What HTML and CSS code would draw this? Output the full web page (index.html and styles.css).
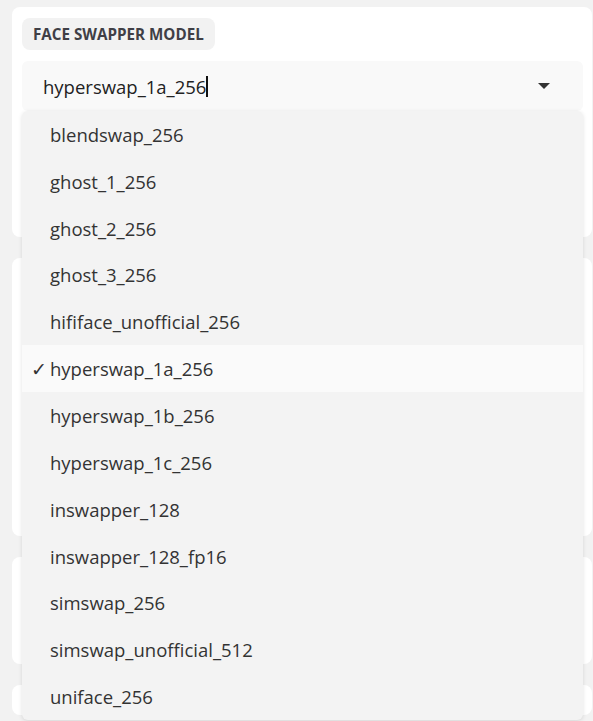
FILE: index.html
```html
<!DOCTYPE html>
<html>
<head>
  <title>Face Swapper</title>
  <link rel="stylesheet" href="styles.css">
</head>
<body>
  <div class="page">

    <div class="block block-model">
      <span class="block-label">Face Swapper Model</span>

      <div class="dropdown">
        <div class="dropdown-input">
          <span class="dropdown-value">hyperswap_1a_256</span><span class="caret"></span>
          <span class="arrow"></span>
        </div>

        <ul class="options">
          <li class="option">blendswap_256</li>
          <li class="option">ghost_1_256</li>
          <li class="option">ghost_2_256</li>
          <li class="option">ghost_3_256</li>
          <li class="option">hififace_unofficial_256</li>
          <li class="option selected"><span class="check">✓</span>hyperswap_1a_256</li>
          <li class="option">hyperswap_1b_256</li>
          <li class="option">hyperswap_1c_256</li>
          <li class="option">inswapper_128</li>
          <li class="option">inswapper_128_fp16</li>
          <li class="option">simswap_256</li>
          <li class="option">simswap_unofficial_512</li>
          <li class="option">uniface_256</li>
        </ul>
      </div>
    </div>

    <div class="block block-two"></div>
    <div class="block block-three"></div>
    <div class="block block-four"></div>

  </div>
</body>
</html>
```

FILE: styles.css
```css
body {
  background-color: #f2f2f2;
  margin: 0;
  padding: 0;
  font-family: "Open Sans", "Noto Sans", sans-serif;
  color: #333333;
  overflow: hidden;
  height: 721px;
}
.page {
  padding: 7px 1px 0 12px;
  display: flex;
  flex-direction: column;
  gap: 21px;
}
.block {
  background-color: #ffffff;
  border-radius: 8px;
  box-sizing: border-box;
}
.block-model {
  height: 230px;
  padding: 11px 9px 0 10px;
}
.block-two {
  height: 278px;
}
.block-three {
  height: 107px;
}
.block-four {
  height: 30px;
}
.block-label {
  display: inline-block;
  background-color: #f2f2f2;
  border-radius: 8px;
  padding: 6px 11px 6px 11px;
  font-size: 15.2px;
  font-weight: 700;
  line-height: 20px;
  color: #3f3f46;
  text-transform: uppercase;
}
.dropdown {
  position: relative;
  margin-top: 11px;
}
.dropdown-input {
  height: 50px;
  background-color: #f9f9f9;
  border-radius: 6px;
  display: flex;
  align-items: center;
  padding: 0 21px;
  font-size: 18.5px;
}
.dropdown-value {
  color: #222222;
}
.caret {
  display: inline-block;
  width: 2px;
  height: 21px;
  background-color: #111111;
}
.arrow {
  margin-left: auto;
  margin-right: 12px;
  width: 0;
  height: 0;
  border-left: 6px solid transparent;
  border-right: 6px solid transparent;
  border-top: 6px solid #333333;
}
.options {
  position: absolute;
  top: 100%;
  left: 0;
  right: 0;
  margin: 0;
  padding: 0;
  list-style: none;
  background-color: #f3f3f3;
  border-radius: 6px;
  box-shadow: 0 1px 4px rgba(0, 0, 0, 0.12);
}
.option {
  height: 46.85px;
  display: flex;
  align-items: center;
  padding-left: 28px;
  font-size: 18.5px;
  color: #333333;
  position: relative;
}
.option.selected {
  background-color: #fafafa;
}
.check {
  position: absolute;
  left: 9px;
  font-size: 19px;
  font-family: "DejaVu Sans", sans-serif;
  font-weight: 300;
}
```
